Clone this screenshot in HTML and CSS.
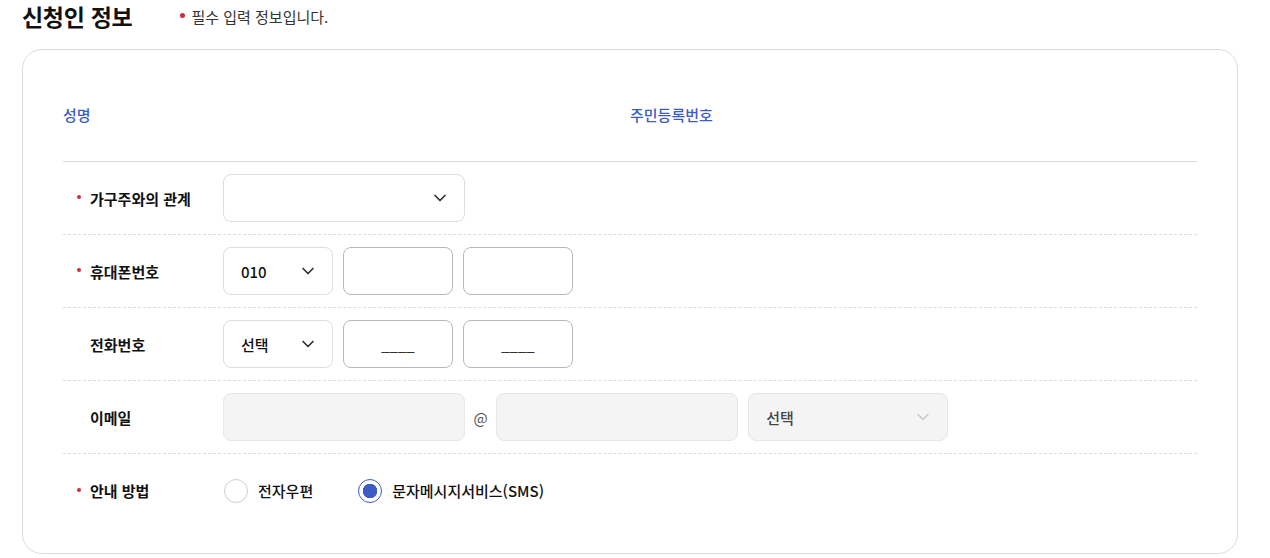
FILE: index.html
```html
<!DOCTYPE html>
<html lang="ko">
<head>
  <meta charset="UTF-8" />
  <meta name="viewport" content="width=device-width, initial-scale=1.0" />
  <title>신청인 정보</title>
  <link rel="stylesheet" href="styles.css">
</head>
<body>
  <div class="page">
    <div class="section-head">
      <h2 class="section-title">신청인 정보</h2>
      <p class="required-note">필수 입력 정보입니다.</p>
    </div>

    <div class="card">
      <div class="info-head">
        <div class="info-item">성명</div>
        <div class="info-item">주민등록번호</div>
      </div>

      <div class="form-row">
        <div class="form-label required">가구주와의 관계</div>
        <div class="form-field">
          <div class="select w-lg">
            <select><option></option></select>
            <svg class="chevron" viewBox="0 0 12 8"><path d="M1 1.5l5 5 5-5" /></svg>
          </div>
        </div>
      </div>

      <div class="form-row">
        <div class="form-label required">휴대폰번호</div>
        <div class="form-field">
          <div class="select w-sm">
            <select><option>010</option></select>
            <svg class="chevron" viewBox="0 0 12 8"><path d="M1 1.5l5 5 5-5" /></svg>
          </div>
          <input type="text" class="text-input w-sm" />
          <input type="text" class="text-input w-sm" />
        </div>
      </div>

      <div class="form-row">
        <div class="form-label">전화번호</div>
        <div class="form-field">
          <div class="select w-sm">
            <select><option>선택</option></select>
            <svg class="chevron" viewBox="0 0 12 8"><path d="M1 1.5l5 5 5-5" /></svg>
          </div>
          <input type="text" class="text-input w-sm center" placeholder="____" />
          <input type="text" class="text-input w-sm center" placeholder="____" />
        </div>
      </div>

      <div class="form-row">
        <div class="form-label">이메일</div>
        <div class="form-field">
          <input type="text" class="text-input w-lg" disabled />
          <span class="at">@</span>
          <input type="text" class="text-input w-lg" disabled />
          <div class="select w-md disabled">
            <select disabled><option>선택</option></select>
            <svg class="chevron" viewBox="0 0 12 8"><path d="M1 1.5l5 5 5-5" /></svg>
          </div>
        </div>
      </div>

      <div class="form-row">
        <div class="form-label required">안내 방법</div>
        <div class="form-field radios">
          <label class="radio"><input type="radio" name="notice" /> 전자우편</label>
          <label class="radio"><input type="radio" name="notice" checked /> 문자메시지서비스(SMS)</label>
        </div>
      </div>
    </div>
  </div>
</body>
</html>
```

FILE: styles.css
```css
:root {
  --text-color: #111;
  --point-blue: #3d5bc6;
  --point-red: #d32a3d;
  --line-color: #dcdcdc;
  --field-border: #dedede;
  --input-border: #b8b8b8;
  --disabled-bg: #f4f4f4;
}

* {
  box-sizing: border-box;
  margin: 0;
  padding: 0;
  font-family: "Noto Sans CJK KR", "Noto Sans", sans-serif;
}

body {
  background: #fff;
  color: var(--text-color);
}

.page {
  width: 1216px;
  margin-left: 22px;
}

.section-head {
  display: flex;
  align-items: center;
  height: 32px;
  margin-bottom: 17px;
}

.section-title {
  font-size: 23px;
  font-weight: 700;
  line-height: 32px;
  letter-spacing: -0.3px;
}

.required-note {
  position: relative;
  margin-left: 47px;
  padding-left: 12px;
  font-size: 15px;
  color: #333;
}

.required-note::before {
  content: "";
  position: absolute;
  left: 1px;
  top: 50%;
  width: 5px;
  height: 5px;
  margin-top: -3px;
  border-radius: 50%;
  background: var(--point-red);
}

.card {
  border: 1px solid var(--line-color);
  border-radius: 20px;
  padding: 39px 40px 26px;
}

.info-head {
  display: grid;
  grid-template-columns: 1fr 1fr;
  padding: 14px 0 34px;
  border-bottom: 1px solid var(--line-color);
}

.info-item {
  font-size: 15px;
  font-weight: 500;
  line-height: 24px;
  color: var(--point-blue);
}

.form-row {
  display: flex;
  align-items: center;
  min-height: 73px;
  border-bottom: 1px dashed var(--line-color);
}

.form-row:last-child {
  border-bottom: none;
}

.form-label {
  position: relative;
  width: 160px;
  padding-left: 27px;
  font-size: 15px;
  font-weight: 700;
}

.form-label.required::before {
  content: "";
  position: absolute;
  left: 14px;
  top: 50%;
  width: 4px;
  height: 4px;
  margin-top: -3px;
  border-radius: 50%;
  background: var(--point-red);
}

.form-field {
  display: flex;
  align-items: center;
  gap: 10px;
}

.w-sm { width: 110px; }
.w-md { width: 200px; }
.w-lg { width: 242px; }

.select {
  position: relative;
  height: 48px;
}

.select select {
  appearance: none;
  width: 100%;
  height: 100%;
  padding: 0 36px 0 17px;
  border: 1px solid var(--field-border);
  border-radius: 8px;
  background: #fff;
  font-size: 15px;
  font-weight: 500;
  color: var(--text-color);
}

.select .chevron {
  position: absolute;
  right: 19px;
  top: 50%;
  width: 12px;
  height: 8px;
  margin-top: -4px;
  fill: none;
  stroke: #333;
  stroke-width: 1.7;
  stroke-linecap: round;
  stroke-linejoin: round;
  pointer-events: none;
}

.select.disabled select {
  background: var(--disabled-bg);
  border-color: #e6e6e6;
  color: #444;
  opacity: 1;
}

.select.disabled .chevron {
  stroke: #c4c4c4;
  stroke-width: 1.2;
}

.text-input {
  height: 48px;
  padding: 0 14px;
  border: 1px solid var(--input-border);
  border-radius: 8px;
  background: #fff;
  font-size: 15px;
  color: var(--text-color);
}

.text-input.center {
  text-align: center;
}

.text-input::placeholder {
  color: #333;
}

.text-input:disabled {
  background: var(--disabled-bg);
  border-color: #e6e6e6;
}

.at {
  margin: 0 -1.5px;
  font-size: 15px;
  color: #555;
}

.radios {
  gap: 44px;
}

.radio {
  display: flex;
  align-items: center;
  gap: 10px;
  font-size: 15px;
  font-weight: 500;
  cursor: pointer;
}

.radio input {
  appearance: none;
  width: 24px;
  height: 24px;
  margin-left: 1px;
  border: 1px solid #cfcfcf;
  border-radius: 50%;
  background: #fff;
}

.radio input:checked {
  border-color: var(--point-blue);
  background: radial-gradient(circle, var(--point-blue) 0 7px, #fff 7.5px);
}
```
